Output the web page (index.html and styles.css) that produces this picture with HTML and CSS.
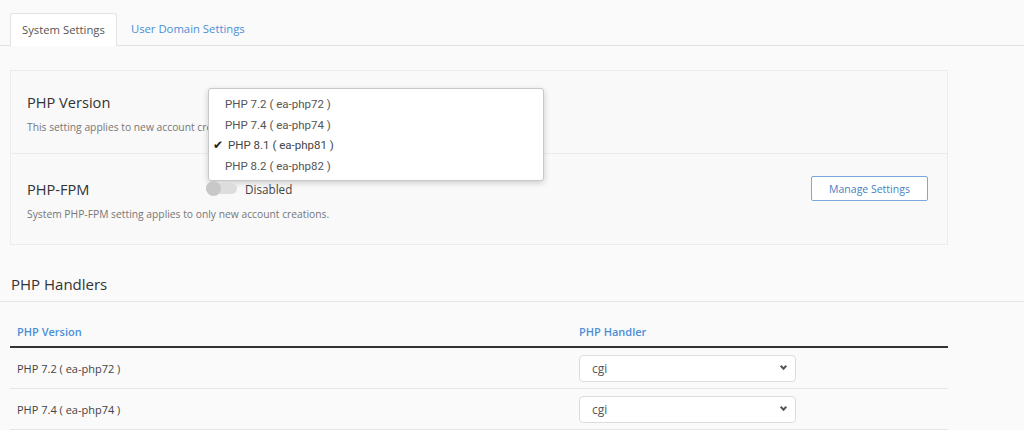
FILE: index.html
```html
<!DOCTYPE html>
<html>
<head>
<link rel="stylesheet" href="styles.css">
</head>
<body>
  <div class="tabs">
    <div class="tab tab-active">System Settings</div>
    <div class="tab">User Domain Settings</div>
  </div>

  <div class="panel">
    <div class="setting">
      <div class="setting-head">
        <div class="setting-title">PHP Version</div>
        <div class="version-select">
          <div class="select-box"></div>
          <div class="select-menu">
            <div class="menu-item">PHP 7.2 ( ea-php72 )</div>
            <div class="menu-item">PHP 7.4 ( ea-php74 )</div>
            <div class="menu-item menu-checked"><span class="check">&#10004;</span>PHP 8.1 ( ea-php81 )</div>
            <div class="menu-item">PHP 8.2 ( ea-php82 )</div>
          </div>
        </div>
      </div>
      <div class="setting-desc">This setting applies to new account creations.</div>
    </div>
    <div class="setting setting-fpm">
      <div class="setting-head">
        <div class="setting-title">PHP-FPM</div>
        <div class="toggle">
          <span class="toggle-track"><span class="toggle-knob"></span></span>
          <span class="toggle-label">Disabled</span>
        </div>
        <button class="manage-button">Manage Settings</button>
      </div>
      <div class="setting-desc">System PHP-FPM setting applies to only new account creations.</div>
    </div>
  </div>

  <h2 class="section-title">PHP Handlers</h2>

  <table class="handlers">
    <thead>
      <tr>
        <th class="col-version">PHP Version</th>
        <th>PHP Handler</th>
      </tr>
    </thead>
    <tbody>
      <tr>
        <td>PHP 7.2 ( ea-php72 )</td>
        <td><div class="handler-select">cgi<span class="chevron"></span></div></td>
      </tr>
      <tr>
        <td>PHP 7.4 ( ea-php74 )</td>
        <td><div class="handler-select">cgi<span class="chevron"></span></div></td>
      </tr>
    </tbody>
  </table>
</body>
</html>
```
FILE: styles.css
```css
body {
  background-color: #fafafa;
  color: #333;
  font-family: "Open Sans", "Liberation Sans", sans-serif;
  margin: 0;
  overflow: hidden;
}
.tabs {
  border-bottom: 1px solid #e3e3e3;
  display: flex;
  height: 32px;
  padding: 13px 0 0 10px;
}
.tab {
  color: #4a8fd8;
  font-size: 11.3px;
  line-height: 32px;
  padding: 0 14px;
}
.tab-active {
  background-color: #fff;
  border: 1px solid #e3e3e3;
  border-bottom: none;
  border-radius: 3px 3px 0 0;
  color: #555;
  height: 32px;
  padding: 0 11px;
}
.panel {
  background-color: #f9f9f9;
  border: 1px solid #ececec;
  margin: 24px 0 0 10px;
  width: 936px;
}
.setting {
  padding: 17px 19px 18px 16px;
}
.setting-fpm {
  border-top: 1px solid #ececec;
  padding: 22px 19px 22px 16px;
}
.setting-head {
  align-items: center;
  display: flex;
  height: 28px;
}
.setting-fpm .setting-head {
  height: 25px;
}
.setting-title {
  color: #333;
  font-size: 14.6px;
  width: 181px;
}
.setting-desc {
  color: #777;
  font-size: 10.3px;
  line-height: 16px;
  margin-top: 3px;
}
.setting-fpm .setting-desc {
  margin-top: 5px;
}
.version-select {
  height: 28px;
  position: relative;
  width: 137px;
}
.select-box {
  background-color: #fff;
  border: 1px solid #ddd;
  border-radius: 4px;
  height: 26px;
}
.select-menu {
  background-color: #fff;
  border: 1px solid #c8c8c8;
  border-radius: 3px;
  box-shadow: 0 2px 6px rgba(0, 0, 0, 0.18);
  left: 0;
  padding: 5px 0 4px;
  position: absolute;
  top: 0;
  width: 334px;
}
.menu-item {
  color: #555;
  font-family: Roboto, "Liberation Sans", sans-serif;
  font-size: 11.5px;
  line-height: 20.5px;
  padding-left: 16px;
}
.menu-checked {
  color: #444;
  padding-left: 4px;
}
.check {
  color: #222;
  display: inline-block;
  font-size: 12px;
  width: 15px;
}
.toggle {
  align-items: center;
  display: flex;
  flex: 1;
}
.toggle-track {
  background-color: #ddd;
  border-radius: 6px;
  display: inline-block;
  height: 11px;
  margin-left: -2px;
  position: relative;
  width: 31px;
}
.toggle-knob {
  background-color: #c8c8c8;
  border-radius: 50%;
  height: 15px;
  left: 0;
  position: absolute;
  top: -2px;
  width: 15px;
}
.toggle-label {
  color: #444;
  font-size: 11.7px;
  margin-left: 8px;
}
.manage-button {
  background-color: #fff;
  border: 1px solid #79a9de;
  border-radius: 2px;
  color: #4a7fc0;
  font-family: "Open Sans", "Liberation Sans", sans-serif;
  font-size: 10.5px;
  height: 25px;
  width: 117px;
}
.section-title {
  border-bottom: 1px solid #e6e6e6;
  color: #333;
  font-size: 15px;
  font-weight: normal;
  line-height: 22px;
  margin: 28px 0 0 0;
  padding: 0 0 6px 11px;
}
.handlers {
  border-collapse: collapse;
  margin: 14px 0 0 10px;
  width: 938px;
}
.handlers th {
  border-bottom: 2px solid #333;
  color: #4a8fd8;
  font-size: 11px;
  font-weight: 600;
  height: 30px;
  padding: 0 7px;
  text-align: left;
  vertical-align: middle;
}
.handlers .col-version {
  width: 548px;
}
.handlers td {
  border-bottom: 1px solid #e6e6e6;
  color: #444;
  font-size: 11px;
  height: 40px;
  padding: 0 7px;
}
.handler-select {
  align-items: center;
  background-color: #fff;
  border: 1px solid #ddd;
  border-radius: 4px;
  box-sizing: border-box;
  color: #555;
  display: flex;
  font-size: 12px;
  height: 27px;
  justify-content: space-between;
  padding: 0 9px 0 12px;
  width: 217px;
}
.chevron {
  border-bottom: 2px solid #555;
  border-right: 2px solid #555;
  height: 3px;
  margin-top: -3px;
  transform: rotate(45deg);
  width: 3px;
}
```
